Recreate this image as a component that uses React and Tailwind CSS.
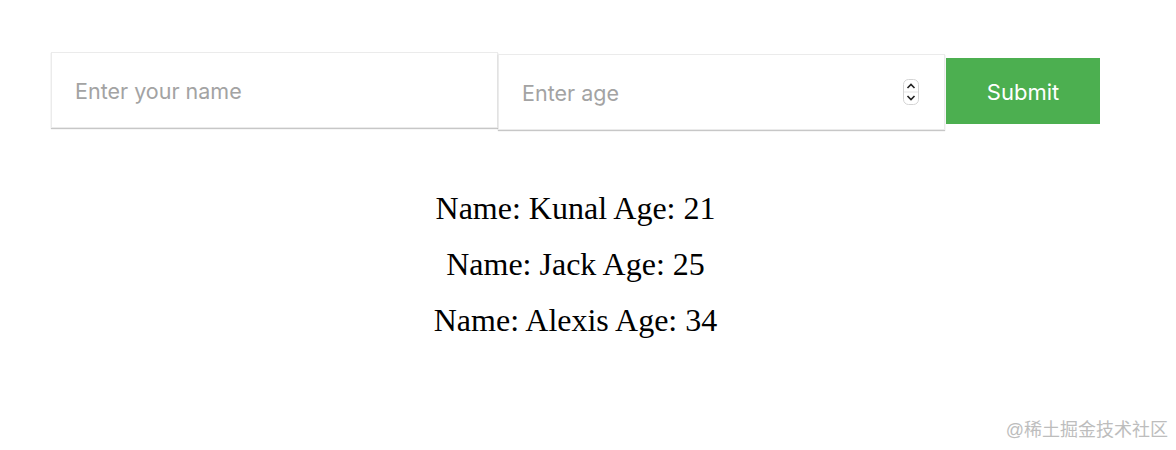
const people = [
  { name: "Kunal", age: 21 },
  { name: "Jack", age: 25 },
  { name: "Alexis", age: 34 },
];

const Spinner = () => (
  <svg width="16" height="26" viewBox="0 0 16 26" className="shrink-0">
    <rect x="0.5" y="0.5" width="15" height="25" rx="5" fill="#fff" stroke="#d4d4d4" />
    <line x1="1" y1="13" x2="15" y2="13" stroke="#e5e5e5" />
    <path d="M4.5 9 L8 5.5 L11.5 9" fill="none" stroke="#222" strokeWidth="1.6" />
    <path d="M4.5 17 L8 20.5 L11.5 17" fill="none" stroke="#222" strokeWidth="1.6" />
  </svg>
);

export default function App() {
  return (
    <div className="relative h-[450px] w-[1176px] bg-white">
      <div className="ml-[51px] w-[1049px] pt-[52px]">
        <form className="flex items-start" onSubmit={(e) => e.preventDefault()}>
          <input
            type="text"
            placeholder="Enter your name"
            className="h-[76px] w-[447px] border border-[#ebebeb] bg-white px-[23px] pt-[2px] text-[21.5px] text-[#333] shadow-[0_1px_1px_rgba(0,0,0,0.22)] outline-none placeholder:text-[#a3a3a3] font-['Inter',sans-serif]"
          />
          <div className="mt-[2px] flex h-[76px] w-[447px] items-center border border-[#ebebeb] bg-white pl-[23px] pr-[25px] shadow-[0_1px_1px_rgba(0,0,0,0.22)]">
            <input
              type="text"
              placeholder="Enter age"
              className="min-w-0 flex-1 bg-transparent pt-[2px] text-[21.5px] text-[#333] outline-none placeholder:text-[#a3a3a3] font-['Inter',sans-serif]"
            />
            <Spinner />
          </div>
          <button
            type="submit"
            className="ml-px mt-[6px] h-[66px] w-[154px] bg-[#4caf50] pt-[2px] text-[22px] text-white font-['Inter',sans-serif]"
          >
            Submit
          </button>
        </form>
        <div className="mt-[60px] flex flex-col items-center gap-[20px] font-['Liberation_Serif',serif] text-[32px] leading-[36px] text-black">
          {people.map((p, idx) => (
            <p key={"p" + idx}>
              Name: {p.name} Age: {p.age}
            </p>
          ))}
        </div>
      </div>
      <div className="absolute bottom-[6px] right-[8px] font-['Liberation_Sans','Noto_Sans_CJK_SC',sans-serif] text-[18px] text-[#bdbdbd]">
        @稀土掘金技术社区
      </div>
    </div>
  );
}
